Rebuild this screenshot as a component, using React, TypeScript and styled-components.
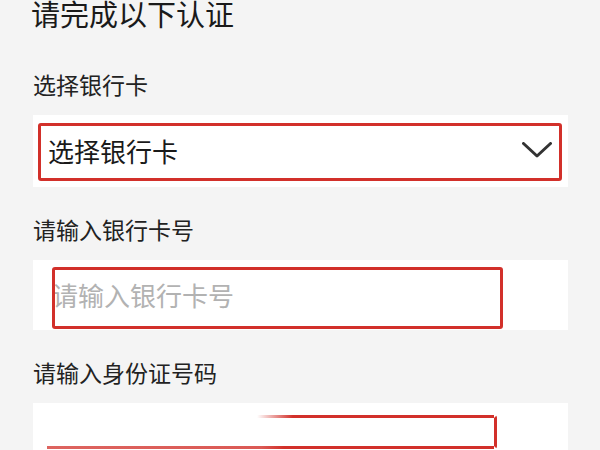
import React from 'react';
import styled, { createGlobalStyle } from 'styled-components';

const GlobalStyle = createGlobalStyle`
  html, body {
    margin: 0;
    padding: 0;
    background: #f4f4f4;
  }
  body {
    font-family: 'Noto Sans CJK SC', 'Noto Sans', sans-serif;
    color: #1f1f1f;
    overflow: hidden;
  }
`;

const Page = styled.div`
  width: 600px;
  height: 450px;
  box-sizing: border-box;
  padding: 0 32px 0 33px;
  display: flex;
  flex-direction: column;
  overflow: hidden;
`;

const Title = styled.h1`
  margin: -2px 0 0 -2px;
  font-size: 29px;
  line-height: 30px;
  font-weight: 400;
  color: #1a1a1a;
`;

const Label = styled.div<{ $first?: boolean }>`
  margin-top: ${(p) => (p.$first ? '45px' : '31px')};
  font-size: 23px;
  line-height: 23px;
  color: #222;
`;

const Field = styled.div<{ $height: number; $pad: number }>`
  position: relative;
  flex-shrink: 0;
  margin-top: 19px;
  height: ${(p) => p.$height}px;
  background: #fff;
  display: flex;
  align-items: center;
  justify-content: space-between;
  padding: 0 16px 0 ${(p) => p.$pad}px;
`;

const Value = styled.span<{ $placeholder?: boolean }>`
  font-size: 26px;
  line-height: 26px;
  color: ${(p) => (p.$placeholder ? '#b2b2b2' : '#1a1a1a')};
`;

const Chevron = styled.svg`
  width: 30px;
  height: 16px;
  margin-bottom: 2px;
`;

// red annotation boxes drawn over the screenshot
const Mark = styled.div<{ $top: number; $left: number; $right: number; $height: number; $faded?: boolean }>`
  position: absolute;
  top: ${(p) => p.$top}px;
  left: ${(p) => p.$left}px;
  right: ${(p) => p.$right}px;
  height: ${(p) => p.$height}px;
  box-sizing: border-box;
  border: 3px solid #d2302a;
  border-radius: 3px;
  pointer-events: none;
  ${(p) =>
    p.$faded &&
    `
    border-top-color: transparent;
    border-left-color: transparent;
    border-bottom-color: transparent;
    &::before, &::after {
      content: '';
      position: absolute;
      left: -3px;
      right: 0;
      height: 3px;
    }
    &::before {
      top: -3px;
      background: linear-gradient(90deg, rgba(210,48,42,0) 0%, rgba(210,48,42,0) 47%, #d2302a 55%);
    }
    &::after {
      bottom: -3px;
      background: linear-gradient(90deg, rgba(210,48,42,0.75) 0%, rgba(210,48,42,0.8) 48%, #d2302a 53%);
    }
  `}
`;

export default function App() {
  return (
    <>
      <GlobalStyle />
      <Page>
        <Title>请完成以下认证</Title>

        <Label $first>选择银行卡</Label>
        <Field $height={72} $pad={15}>
          <Value>选择银行卡</Value>
          <Chevron viewBox="0 0 30 16" fill="none">
            <polyline points="1.5,1.5 15,14 28.5,1.5" stroke="#333" strokeWidth="3" strokeLinecap="round" strokeLinejoin="round" />
          </Chevron>
          <Mark $top={8} $left={5} $right={6} $height={58} />
        </Field>

        <Label>请输入银行卡号</Label>
        <Field $height={70} $pad={19}>
          <Value $placeholder>请输入银行卡号</Value>
          <Mark $top={7} $left={19} $right={65} $height={62} />
        </Field>

        <Label>请输入身份证号码</Label>
        <Field $height={70} $pad={19}>
          <Mark $top={12} $left={14} $right={71} $height={34} $faded />
        </Field>
      </Page>
    </>
  );
}
